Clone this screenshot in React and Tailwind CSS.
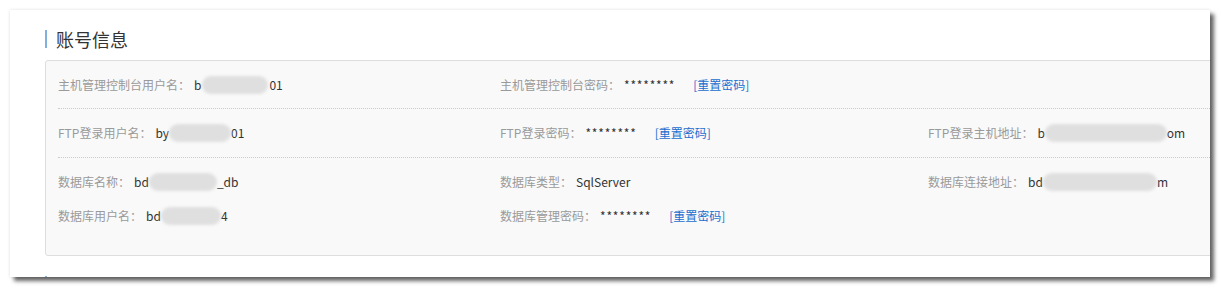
import React from 'react';

// blurred-out part of a value, as in the masked screenshot
function Blur({ className }) {
  return (
    <span
      className={`inline-block h-[18px] align-middle rounded-full bg-[#dfdfdf] blur-[1.5px] ${className}`}
    />
  );
}

function Field({ label, children }) {
  return (
    <div className="flex items-center whitespace-nowrap">
      <span className="text-[#9a9a9a]">{label}</span>
      <span className="ml-1 flex items-center text-[#333]">{children}</span>
    </div>
  );
}

function Stars({ link }) {
  return (
    <>
      <span className="tracking-[0.8px]">********</span>
      {link && (
        <a href="#" className="ml-[18px] text-[#1a6fcf]">
          [重置密码]
        </a>
      )}
    </>
  );
}

export default function App() {
  return (
    <div className="w-[1221px] h-[289px] bg-white pt-[10px] pl-[10px] font-['Noto_Sans_CJK_SC','Noto_Sans',sans-serif] text-[12px]">
      <div className="w-[1200px] h-[267px] overflow-hidden bg-white shadow-[0_0_3px_rgba(0,0,0,0.12),4px_4px_4px_rgba(0,0,0,0.6)]">
        <div className="pt-5 pl-[35px]">
          <h2 className="flex items-center h-[18px] border-l-2 border-[#7fb0e0] pl-[9px] text-[18px] leading-[18px] text-[#333] font-normal">
            账号信息
          </h2>

          <div className="mt-3 w-[1200px] rounded-[3px] border border-[#dddddd] bg-[#f9f9f9] pl-3">
            <div className="grid grid-cols-[442px_428px_1fr] items-center h-[48px] border-b border-dotted border-[#cccccc]">
              <Field label="主机管理控制台用户名：">
                b<Blur className="w-[66px] mx-[1px]" />01
              </Field>
              <Field label="主机管理控制台密码：">
                <Stars link />
              </Field>
              <div />
            </div>

            <div className="grid grid-cols-[442px_428px_1fr] items-center h-[49px] border-b border-dotted border-[#cccccc]">
              <Field label="FTP登录用户名：">
                by<Blur className="w-[62px]" />01
              </Field>
              <Field label="FTP登录密码：">
                <Stars link />
              </Field>
              <Field label="FTP登录主机地址：">
                b<Blur className="w-[122px]" />om
              </Field>
            </div>

            <div className="pt-[7px] pb-[22px]">
              <div className="grid grid-cols-[442px_428px_1fr] items-center h-[34px]">
                <Field label="数据库名称：">
                  bd<Blur className="w-[68px]" />_db
                </Field>
                <Field label="数据库类型：">SqlServer</Field>
                <Field label="数据库连接地址：">
                  bd<Blur className="w-[114px]" />m
                </Field>
              </div>
              <div className="grid grid-cols-[442px_428px_1fr] items-center h-[34px]">
                <Field label="数据库用户名：">
                  bd<Blur className="w-[60px]" />4
                </Field>
                <Field label="数据库管理密码：">
                  <Stars link />
                </Field>
                <div />
              </div>
            </div>
          </div>

          <h2 className="mt-[20px] flex items-center h-[18px] border-l-2 border-[#7fb0e0] pl-[9px] text-[18px] leading-[18px] text-[#333] font-normal">
            其他信息
          </h2>
        </div>
      </div>
    </div>
  );
}
